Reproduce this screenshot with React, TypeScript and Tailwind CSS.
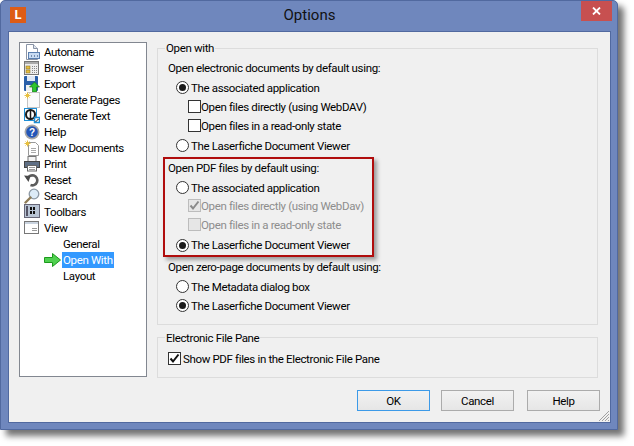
import type { ReactNode } from "react";

const font = "font-['Roboto','Noto_Sans',sans-serif]";

function Sparkle() {
  return (
    <g stroke="#e8c040" strokeWidth="1">
      <path d="M3.5 0.5v6M0.5 3.5h6M1.5 1.5l4 4M5.5 1.5l-4 4" />
    </g>
  );
}

const icons: Record<string, ReactNode> = {
  Autoname: (
    <>
      <path d="M2.5 .5h7l4 4v11h-11z" fill="#fff" stroke="#8a94a6" />
      <path d="M9.5 .5v4h4" fill="#dfe6ef" stroke="#8a94a6" />
      <rect x="4.5" y="8.5" width="11" height="6" fill="#c9dcf3" stroke="#5a7fb0" />
      <path d="M7 12h1M10 12h1M13 12h1" stroke="#20406e" />
    </>
  ),
  Browser: (
    <>
      <rect x=".5" y="1.5" width="14" height="13" fill="#eee" stroke="#777" />
      <rect x="1" y="2" width="13" height="2" fill="#aaa" />
      <rect x="2" y="6" width="4" height="3" fill="#e8c040" stroke="#7a6420" strokeWidth=".5" />
      <rect x="2" y="10" width="4" height="3" fill="#e8c040" stroke="#7a6420" strokeWidth=".5" />
      <path d="M8 6.500h5M8 8.500h5M8 10.500h5M8 12.500h5" stroke="#888" strokeDasharray="1 1" />
    </>
  ),
  Export: (
    <>
      <rect x="0" y="0" width="14" height="15" rx="1" fill="#2a5fa8" />
      <rect x="3" y="0" width="8" height="5" fill="#dfe8f5" />
      <rect x="2" y="9" width="8" height="6" fill="#f0f0f0" />
      <path d="M11.500 6l5 5h-3v5h-4v-5h-3z" transform="translate(-1 0)" fill="#2ec52e" stroke="#167a16" strokeWidth=".7" />
    </>
  ),
  "Generate Pages": (
    <>
      <rect x="3.500" y=".5" width="12" height="15" fill="#fafafa" stroke="#c4c4c4" />
      <Sparkle />
    </>
  ),
  "Generate Text": (
    <>
      <rect x=".5" y=".5" width="12" height="12" fill="#fff" stroke="#1f8fd6" />
      <circle cx="6.500" cy="6.500" r="4.500" fill="none" stroke="#1a1a1a" strokeWidth="2" />
      <path d="M6.500 1v11" stroke="#1a1a1a" strokeWidth="1.500" />
      <rect x="10.500" y="9.500" width="5" height="5" fill="#fff" stroke="#1f8fd6" strokeWidth="1.500" />
      <path d="M11.500 14l3-3" stroke="#1a1a1a" />
    </>
  ),
  Help: (
    <>
      <circle cx="8" cy="8" r="7.500" fill="#a8a8a8" />
      <circle cx="8" cy="8" r="5.800" fill="#2356b8" />
      <text x="8" y="11.500" textAnchor="middle" fontSize="10" fontWeight="700" fill="#fff" fontFamily="Liberation Sans, sans-serif">?</text>
    </>
  ),
  "New Documents": (
    <>
      <path d="M4.500 2.500h7l3 3v10h-10z" fill="#fff" stroke="#999" />
      <path d="M7 8.500h5M7 10.500h5M7 12.500h5" stroke="#aaa" />
      <Sparkle />
    </>
  ),
  Print: (
    <>
      <rect x="4" y="0.500" width="8" height="5" fill="#f4f4f4" stroke="#777" />
      <rect x="0.500" y="5.500" width="15" height="6" fill="#5f6f85" stroke="#444" />
      <rect x="3.500" y="9.500" width="9" height="5.500" fill="#fff" stroke="#666" />
      <path d="M5 11.500h6M5 13.500h6" stroke="#999" />
    </>
  ),
  Reset: (
    <>
      <path d="M3.500 7a5 5 0 1 1 3 6" fill="none" stroke="#5c5c5c" strokeWidth="2.600" />
      <path d="M0 3.500l6.500 .5l-2 6z" fill="#4a4a4a" />
    </>
  ),
  Search: (
    <>
      <circle cx="10" cy="6" r="4.800" fill="#dcebf7" stroke="#8c98a4" strokeWidth="1.300" />
      <path d="M6.500 9.500l-5 5" stroke="#8f7d58" strokeWidth="2.400" strokeLinecap="round" />
    </>
  ),
  Toolbars: (
    <>
      <rect x=".5" y=".5" width="15" height="13" fill="#b8c4d4" stroke="#667" />
      <rect x="6" y="3" width="2" height="3" fill="#111" />
      <rect x="9" y="3" width="2" height="3" fill="#111" />
      <rect x="6" y="7" width="2" height="3" fill="#111" />
      <rect x="9" y="7" width="2" height="3" fill="#111" />
      <rect x="2" y="2" width="2" height="10" fill="#556" />
    </>
  ),
  View: (
    <>
      <rect x=".5" y="1.500" width="14" height="12" fill="#fff" stroke="#777" />
      <rect x="1" y="2" width="13" height="2" fill="#c9d3df" />
      <path d="M8 8.500h5M8 10.500h5" stroke="#999" />
    </>
  ),
};

const tree = [
  "Autoname",
  "Browser",
  "Export",
  "Generate Pages",
  "Generate Text",
  "Help",
  "New Documents",
  "Print",
  "Reset",
  "Search",
  "Toolbars",
  "View",
];

function Radio({ on }: { on?: boolean }) {
  return (
    <span className="flex h-[13px] w-[13px] shrink-0 items-center justify-center rounded-full border border-[#333] bg-white">
      {on && <span className="h-[7px] w-[7px] rounded-full bg-[#1a1a1a]" />}
    </span>
  );
}

function Check({ on, off }: { on?: boolean; off?: boolean }) {
  return (
    <span
      className={`flex h-[13px] w-[13px] shrink-0 items-center justify-center border ${
        off ? "border-[#bcbcbc] bg-[#e6e6e6]" : "border-[#333] bg-white"
      }`}
    >
      {on && (
        <svg width="11" height="11" viewBox="0 0 11 11">
          <path d="M1.500 5.500l2.500 3l5.500-7" fill="none" stroke={off ? "#8a8a8a" : "#111"} strokeWidth="2" />
        </svg>
      )}
    </span>
  );
}

function RadioRow({ on, children, className = "h-[19px]" }: { on?: boolean; children: ReactNode; className?: string }) {
  return (
    <div className={`ml-[8px] flex items-center gap-[2px] ${className}`}>
      <Radio on={on} />
      <span>{children}</span>
    </div>
  );
}

function CheckRow({ on, off, children, className = "" }: { on?: boolean; off?: boolean; children: ReactNode; className?: string }) {
  return (
    <div className={`ml-[20px] flex h-[19px] items-center ${off ? "text-[#8d8d8d]" : ""} ${className}`}>
      <Check on={on} off={off} />
      <span>{children}</span>
    </div>
  );
}

function Button({ children, primary }: { children: ReactNode; primary?: boolean }) {
  return (
    <button
      className={`flex h-[21px] w-[73px] items-center justify-center border bg-gradient-to-b from-[#f2f2f2] to-[#e6e6e6] ${
        primary ? "border-[#3c9ae8]" : "border-[#ababab]"
      }`}
    >
      {children}
    </button>
  );
}

export default function App() {
  return (
    <div className={`h-[446px] w-[634px] overflow-hidden bg-white text-[11.5px] leading-[16px] tracking-[-0.35px] text-black ${font}`}>
      <div className="flex h-[430px] w-[618px] flex-col rounded-t-[5px] border border-[#51699f] bg-[#6f87bd] shadow-[6px_6px_6px_rgba(0,0,0,0.55)]">
        {/* Title bar */}
        <div className="flex h-[30px] shrink-0 items-start">
          <div className="ml-[9px] mt-[6px] flex h-[16px] w-[16px] items-center justify-center bg-[#dd5c16] text-[13px] font-bold tracking-normal text-white">
            L
          </div>
          <div className="flex-1 pt-[4px] pl-[12px] text-center text-[15px] leading-[20px] tracking-normal text-[#111]">
            Options
          </div>
          <div className="mr-[5px] flex h-[20px] w-[31px] items-center justify-center bg-[#c75050]">
            <svg width="9" height="8" viewBox="0 0 9 8">
              <path d="M1 .5l7 7M8 .5l-7 7" stroke="#fff" strokeWidth="1.800" />
            </svg>
          </div>
        </div>

        {/* Client area */}
        <div className="relative ml-[7px] mr-[6px] flex h-[392px] flex-col border border-[#51699f] bg-[#f0f0f0]">
          <div className="flex h-[346px] pl-[10px] pt-[10px]">
            {/* Tree */}
            <div className="h-[335px] w-[128px] shrink-0 border border-[#828790] bg-white pt-[1px]">
              {tree.map((name) => (
                <div key={name} className="flex h-[16px] items-center gap-[4px] pl-[4px]">
                  <svg width="16" height="16" viewBox="0 0 16 16" className="shrink-0">
                    {icons[name]}
                  </svg>
                  <span>{name}</span>
                </div>
              ))}
              <div className="flex h-[16px] items-center pl-[43px]">General</div>
              <div className="flex h-[16px] items-center">
                <svg width="17" height="14" viewBox="0 0 17 14" className="ml-[24px] mr-[1px] shrink-0">
                  <path d="M.5 4.500h8v-4l8 6.500l-8 6.500v-4h-8z" fill="#50d050" stroke="#1c9a1c" />
                </svg>
                <span className="bg-[#3399ff] px-[1px] text-white">Open With</span>
              </div>
              <div className="flex h-[16px] items-center pl-[43px]">Layout</div>
            </div>

            {/* Settings */}
            <div className="ml-[10px] flex w-[441px] flex-col">
              <div className="mt-[6px] h-[277px] border border-[#dcdcdc] pl-[10px]">
                <div className="-ml-[3px] -mt-[9px] w-fit bg-[#f0f0f0] px-[1px]">Open with</div>
                <div className="mt-[4px] h-[16px]">Open electronic documents by default using:</div>
                <div className="mt-[2px]">
                  <RadioRow on>The associated application</RadioRow>
                  <CheckRow>Open files directly (using WebDAV)</CheckRow>
                  <CheckRow>Open files in a read-only state</CheckRow>
                  <RadioRow className="h-[21px]">The Laserfiche Document Viewer</RadioRow>
                </div>
                <div className="relative mt-[4px]">
                  <div className="h-[16px]">Open PDF files by default using:</div>
                  <div className="mt-[2px]">
                    <RadioRow>The associated application</RadioRow>
                    <CheckRow on off className="-mt-[1px]">Open files directly (using WebDav)</CheckRow>
                    <CheckRow off>Open files in a read-only state</CheckRow>
                    <RadioRow on className="mt-[1px] h-[20px]">The Laserfiche Document Viewer</RadioRow>
                  </div>
                  <div className="pointer-events-none absolute -left-[5px] -top-[3px] h-[100px] w-[211px] border-2 border-[#b00d0d] shadow-[3px_3px_4px_rgba(0,0,0,0.35)]" />
                </div>
                <div className="mt-[4px] h-[16px]">Open zero-page documents by default using:</div>
                <div className="mt-[2px]">
                  <RadioRow>The Metadata dialog box</RadioRow>
                  <RadioRow on>The Laserfiche Document Viewer</RadioRow>
                </div>
              </div>
              <div className="mt-[12px] h-[41px] border border-[#dcdcdc] pl-[10px]">
                <div className="-ml-[3px] -mt-[8px] w-fit bg-[#f0f0f0] px-[1px]">Electronic File Pane</div>
                <div className="mt-[3px] flex h-[19px] items-center gap-[2px]">
                  <Check on />
                  <span>Show PDF files in the Electronic File Pane</span>
                </div>
              </div>
            </div>
          </div>

          {/* Buttons */}
          <div className="mt-[12px] flex justify-end pr-[10px]">
            <Button primary>OK</Button>
            <div className="w-[11px]" />
            <Button>Cancel</Button>
            <div className="w-[13px]" />
            <Button>Help</Button>
          </div>

          {/* Resize grip */}
          <svg width="12" height="12" viewBox="0 0 12 12" className="absolute bottom-0 right-0">
            <path d="M11 1L1 11M11 4L4 11M11 7L7 11M11 10L10 11" stroke="#a0a0a0" />
          </svg>
        </div>
      </div>
    </div>
  );
}
